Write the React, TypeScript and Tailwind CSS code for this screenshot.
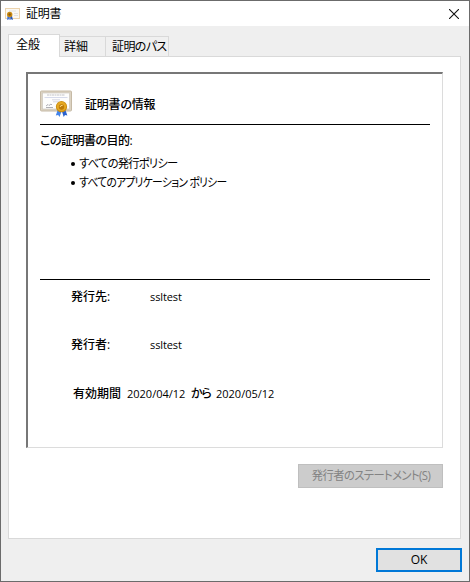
import type { ReactNode } from "react";

function Certificate({ className }: { className: string }) {
  return (
    <svg viewBox="0 0 32 29" className={className}>
      <rect x="0.5" y="1" width="31" height="20" rx="1" fill="#dcd3c3" stroke="#c6baa6" />
      <rect x="2.500" y="3" width="27" height="16" fill="#fdfdfd" stroke="#c9c4ba" strokeWidth="0.6" />
      <path d="M7 5h18" stroke="#b4b4b8" strokeWidth="0.8" strokeDasharray="2 .5" />
      <path d="M4.500 7.500h23" stroke="#ccd1e6" strokeWidth="0.8" />
      <path d="M12 9.800h8M13 11.800h6" stroke="#c4c6da" strokeWidth="0.7" />
      <path d="M6 16l2-1.500 1 1 2-1.500 1 1M6 17.500h7" stroke="#9a9aa2" strokeWidth="0.8" fill="none" />
      <path d="M18 19l-2.200 6.500 2.400-.6 1.300 2.100L22 20z" fill="#4584e8" />
      <path d="M25 19l2.400 6.500-2.400-.6-1.300 2.100L21.500 20z" fill="#2a63cf" />
      <circle cx="21.500" cy="16.700" r="5.600" fill="#c98c10" />
      <circle cx="21.500" cy="16.500" r="4.700" fill="#e5a823" />
      <circle cx="21.500" cy="17" r="2.700" fill="#bd7b08" />
      <path d="M20 17q.4-1.900 2.600-1.600" stroke="#ffe08a" strokeWidth="1" fill="none" />
    </svg>
  );
}

function TitleIcon() {
  return (
    <svg viewBox="0 0 16 14" className="h-[14px] w-[16px]">
      <rect x="0.500" y="1.500" width="14" height="10" fill="#fbf8f2" stroke="#ecd3ac" />
      <path d="M4 4h7M9 6.500h4M9 8.500h4" stroke="#dcdcdc" strokeWidth="0.8" />
      <path d="M2.500 9L2 13l1.500-.8 1 .8.5-3.500z" fill="#3f74d8" />
      <path d="M5 9l.5 4 1-.8 1.500.8-1-4z" fill="#2858b8" />
      <circle cx="4.700" cy="7.500" r="2.700" fill="#c98a12" />
      <circle cx="4.700" cy="7.500" r="1.200" fill="#8f5a08" />
    </svg>
  );
}

function Tab({ className, children }: { className: string; children: ReactNode }) {
  return <div className={`border border-[#d9d9d9] ${className}`}>{children}</div>;
}

export default function App() {
  return (
    <div className="flex h-[582px] w-[470px] flex-col overflow-hidden whitespace-nowrap border border-[#6b6b6b] bg-[#efefef] font-['Open_Sans','Noto_Sans_CJK_JP',sans-serif] text-[12px] leading-[18px] text-black [font-feature-settings:'palt']">
      <header className="flex h-[25px] shrink-0 items-center bg-white pl-[4px]">
        <TitleIcon />
        <span className="ml-[5px] tracking-[-0.2px]">証明書</span>
        <svg viewBox="0 0 10 10" className="ml-auto mr-[10px] h-[10px] w-[10px]">
          <path d="M0 0L10 10M10 0L0 10" stroke="#111" strokeWidth="1.100" />
        </svg>
      </header>

      <nav className="flex h-[30px] shrink-0 items-end pl-[7px]">
        <Tab className="z-10 -mb-px h-[23px] w-[52px] border-b-0 bg-white pl-[7px] leading-[20px]">全般</Tab>
        <Tab className="h-[20px] w-[46px] border-b-0 border-l-0 bg-[#f0f0f0] pl-[4px] leading-[19px]">詳細</Tab>
        <Tab className="h-[20px] w-[63px] border-b-0 border-l-0 bg-[#f0f0f0] pl-[6px] leading-[19px] tracking-[-0.6px]">証明のパス</Tab>
      </nav>

      <main className="ml-[7px] flex h-[483px] w-[453px] shrink-0 flex-col border border-[#d9d9d9] bg-white pl-[17px] pt-[15px]">
        <section className="h-[376px] w-[417px] shrink-0 border-2 border-b border-r border-b-[#dcdcdc] border-l-[#777] border-r-[#dcdcdc] border-t-[#777] pl-[12px] pr-[12px]">
          <div className="flex h-[51px] items-start border-b border-black pt-[16px]">
            <Certificate className="h-[29px] w-[32px]" />
            <h1 className="ml-[13px] mt-[6px] font-medium tracking-[-0.2px]">証明書の情報</h1>
          </div>
          <div className="h-[155px] border-b border-black pt-[7px]">
            <h2 className="font-medium tracking-[-0.5px]">この証明書の目的:</h2>
            <ul className="mt-[4px] pl-[31px] leading-[19px]">
              <li className="flex items-center gap-[4px]">
                <i className="size-[4px] rounded-full bg-black" />
                <span className="origin-left scale-x-[0.94] tracking-[-0.8px]">すべての発行ポリシー</span>
              </li>
              <li className="flex items-center gap-[4px]">
                <i className="size-[4px] rounded-full bg-black" />
                <span className="origin-left scale-x-[0.9] tracking-[-0.8px]">すべてのアプリケーション ポリシー</span>
              </li>
            </ul>
          </div>
          <dl className="pl-[31px] pt-[8px]">
            <div className="flex h-[48px]">
              <dt className="w-[79px] font-medium">発行先:</dt>
              <dd className="text-[11px] tracking-[-0.1px]">ssltest</dd>
            </div>
            <div className="flex h-[49px]">
              <dt className="w-[79px] font-medium">発行者:</dt>
              <dd className="text-[11px] tracking-[-0.1px]">ssltest</dd>
            </div>
            <div className="flex pl-[2px]">
              <dt className="w-[54px] font-medium">有効期間</dt>
              <dd className="w-[64px] text-[11px]">2020/04/12</dd>
              <dd className="w-[25px] font-medium tracking-[-1.2px]">から</dd>
              <dd className="text-[11px]">2020/05/12</dd>
            </div>
          </dl>
        </section>
        <button className="mr-[17px] mt-[16px] flex h-[24px] w-[145px] items-center justify-center self-end border border-[#bfbfbf] bg-[#ccc] text-[#838383]">
          <span className="scale-x-[0.94] tracking-[-0.6px]">発行者のステートメント(S)</span>
        </button>
      </main>

      <footer className="flex justify-end pr-[7px] pt-[9px]">
        <button className="h-[24px] w-[86px] border-2 border-[#0078d7] bg-[#e1e1e1] leading-[20px] tracking-[-0.2px]">OK</button>
      </footer>
    </div>
  );
}
